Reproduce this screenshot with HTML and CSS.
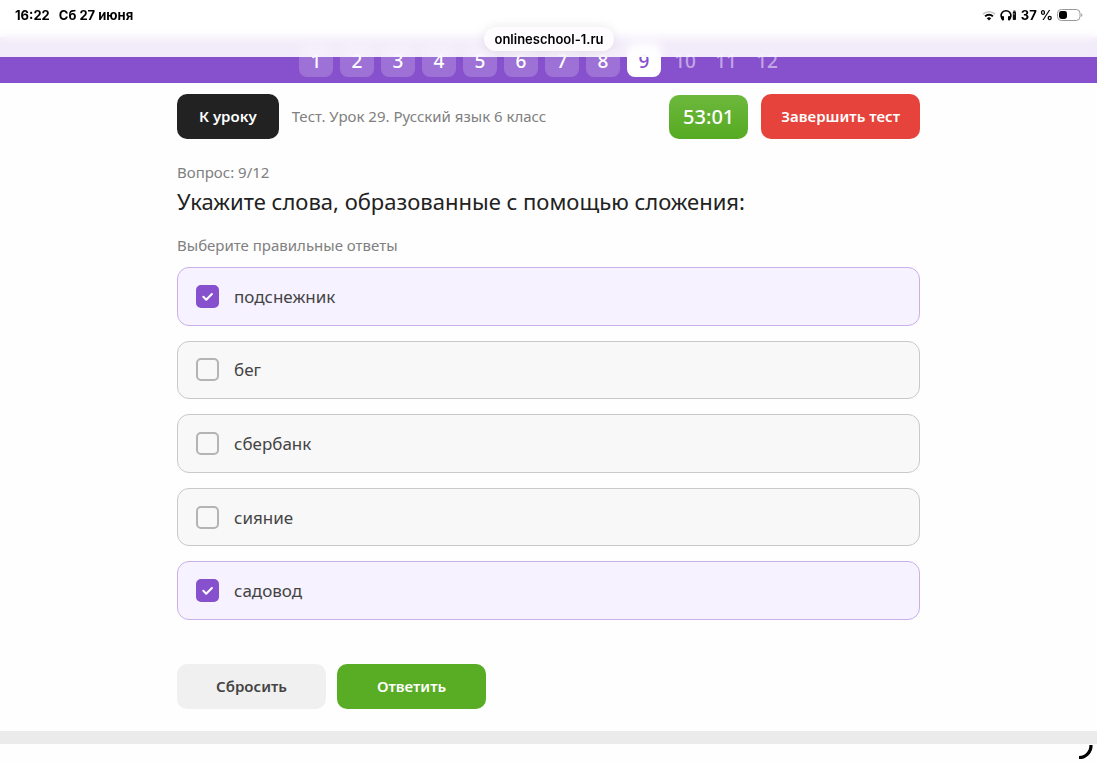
FILE: index.html
```html
<!DOCTYPE html>
<html lang="ru">
<head>
    <meta charset="UTF-8">
    <meta name="viewport" content="width=device-width, initial-scale=1.0">
    <title>Тест. Урок 29. Русский язык 6 класс</title>
    <link rel="stylesheet" href="styles.css">
</head>
<body>
    <!-- Status bar -->
    <div class="status-bar">
        <div class="status-row">
            <div class="status-group status-date">
                <span>16:22</span>
                <span>Сб 27 июня</span>
            </div>
            <div class="status-group">
                <svg class="icon-wifi" width="14" height="11" viewBox="0 0 14 11" fill="none">
                    <path d="M1 4.2a8.6 8.6 0 0 1 12 0" stroke="#c4c4c4" stroke-width="1.7"/>
                    <path d="M3.1 6.4a5.6 5.6 0 0 1 7.8 0" stroke="#000" stroke-width="2"/>
                    <path d="M4.8 8.3a3.2 3.2 0 0 1 4.4 0L7 10.6z" fill="#000"/>
                </svg>
                <svg width="17" height="12" viewBox="0 0 17 12" fill="none">
                    <path d="M3.2 10.6A4.9 4.9 0 1 1 8.8 10.6" stroke="#000" stroke-width="1.6"/>
                    <rect x="1.8" y="6.9" width="2.2" height="4.6" rx="1" fill="#000"/>
                    <rect x="8" y="6.9" width="2.2" height="4.6" rx="1" fill="#000"/>
                    <rect x="13.4" y="1.4" width="2" height="1.4" fill="#444"/>
                    <rect x="12.8" y="2.6" width="3.2" height="8.4" rx=".8" fill="#111"/>
                    <path d="M14 4v2" stroke="#aaa" stroke-width=".8"/>
                </svg>
                <span>37 %</span>
                <svg width="26" height="12" viewBox="0 0 26 12" fill="none">
                    <rect x=".5" y=".5" width="22.5" height="11" rx="3.8" stroke="#999"/>
                    <rect x="2" y="2" width="8" height="8" rx="2.4" fill="#000"/>
                    <path d="M24.2 4.2c1.6.5 1.6 3.1 0 3.6z" fill="#999"/>
                </svg>
            </div>
        </div>
        <div class="address">onlineschool-1.ru</div>
    </div>

    <!-- Question numbers -->
    <nav class="steps">
        <a class="step done" href="#1">1</a>
        <a class="step done" href="#2">2</a>
        <a class="step done" href="#3">3</a>
        <a class="step done" href="#4">4</a>
        <a class="step done" href="#5">5</a>
        <a class="step done" href="#6">6</a>
        <a class="step done" href="#7">7</a>
        <a class="step done" href="#8">8</a>
        <a class="step current" href="#9">9</a>
        <a class="step" href="#10">10</a>
        <a class="step" href="#11">11</a>
        <a class="step" href="#12">12</a>
    </nav>

    <main class="container">
        <header class="test-header">
            <button class="btn btn-dark" type="button">К уроку</button>
            <span class="test-name">Тест. Урок 29. Русский язык 6 класс</span>
            <div class="timer">53:01</div>
            <button class="btn btn-red" type="button">Завершить тест</button>
        </header>

        <form class="question">
            <p class="counter">Вопрос: 9/12</p>
            <h1>Укажите слова, образованные с помощью сложения:</h1>
            <p class="hint">Выберите правильные ответы</p>

            <div class="answers">
                <label class="answer">
                    <input type="checkbox" checked>
                    <svg class="tick" viewBox="0 0 22 22"><path d="M7 11.3l2.8 2.7 5.4-5.3"/></svg>
                    <span>подснежник</span>
                </label>
                <label class="answer">
                    <input type="checkbox">
                    <svg class="tick" viewBox="0 0 22 22"><path d="M7 11.3l2.8 2.7 5.4-5.3"/></svg>
                    <span>бег</span>
                </label>
                <label class="answer">
                    <input type="checkbox">
                    <svg class="tick" viewBox="0 0 22 22"><path d="M7 11.3l2.8 2.7 5.4-5.3"/></svg>
                    <span>сбербанк</span>
                </label>
                <label class="answer">
                    <input type="checkbox">
                    <svg class="tick" viewBox="0 0 22 22"><path d="M7 11.3l2.8 2.7 5.4-5.3"/></svg>
                    <span>сияние</span>
                </label>
                <label class="answer">
                    <input type="checkbox" checked>
                    <svg class="tick" viewBox="0 0 22 22"><path d="M7 11.3l2.8 2.7 5.4-5.3"/></svg>
                    <span>садовод</span>
                </label>
            </div>

            <div class="actions">
                <button class="btn btn-grey" type="reset">Сбросить</button>
                <button class="btn btn-green" type="button">Ответить</button>
            </div>
        </form>
    </main>

    <footer class="footer-line"></footer>

    <svg class="corner" width="18" height="18" viewBox="0 0 18 18" fill="none">
        <path d="M2 14.5A12 12 0 0 0 14 2" stroke="#000" stroke-width="3.2"/>
    </svg>
</body>
</html>
```
FILE: styles.css
```css
* {
    box-sizing: border-box;
}
body {
    font-family: 'Noto Sans', 'Open Sans', sans-serif;
    margin: 0;
    background-color: #fefefe;
    color: #222;
}

/* Status bar */
.status-bar {
    position: fixed;
    top: 0;
    left: 0;
    right: 0;
    z-index: 2;
    height: 57px;
    padding: 6px 14px 0 15px;
    background-color: rgba(255, 255, 255, 0.89);
    backdrop-filter: blur(5px);
    font-family: Inter, sans-serif;
    font-size: 13px;
    font-weight: 700;
    line-height: 18px;
    color: #000;
}
.status-row {
    display: flex;
    justify-content: space-between;
}
.status-group {
    display: flex;
    align-items: center;
    gap: 4px;
}
.status-date {
    gap: 9px;
}
.address {
    width: fit-content;
    margin: 3px auto 0;
    padding: 3px 10px;
    border-radius: 12px;
    background-color: #fffcff;
    box-shadow: 0 0 12px rgba(0, 0, 0, 0.09);
    font-weight: 600;
}

/* Question numbers */
.steps {
    display: flex;
    justify-content: center;
    gap: 7px;
    margin-top: 37px;
    padding: 6px 14px 6px 0;
    background-color: #8750cd;
}
.step {
    width: 34px;
    height: 34px;
    border-radius: 8px;
    font-size: 19px;
    font-weight: 500;
    line-height: 36px;
    text-align: center;
    text-decoration: none;
    color: rgba(255, 255, 255, 0.5);
}
.step.done {
    background-color: rgba(255, 255, 255, 0.19);
    color: #fff;
}
.step.current {
    background-color: #fff;
    color: #8750cd;
}

/* Test */
.container {
    max-width: 743px;
    margin: 0 auto;
    padding: 11px 0 22px;
}
.test-header {
    display: flex;
    align-items: center;
    gap: 13px;
}
.btn {
    height: 45px;
    padding: 0 22px 2px;
    border: none;
    border-radius: 10px;
    font-family: inherit;
    font-size: 15px;
    font-weight: 600;
    color: #fff;
    cursor: pointer;
}
.btn-dark {
    background-color: #222;
}
.btn-red {
    padding: 0 20px 2px;
    background-color: #e5433b;
}
.btn-grey {
    background-color: #f0f0f0;
    color: #444;
}
.btn-green {
    background-color: #58ad25;
}
.test-name {
    flex: 1;
    padding-bottom: 2px;
    font-size: 15px;
    color: #808080;
}
.timer {
    padding: 0 14px;
    border-radius: 10px;
    background: linear-gradient(#6cb83d, #56aa22);
    font-size: 20px;
    font-weight: 500;
    line-height: 44px;
    color: #fff;
}
.counter,
.hint {
    margin: 0;
    font-size: 15px;
    line-height: 20px;
    color: #808080;
}
.counter {
    margin-top: 23px;
}
h1 {
    margin: 4px 0 19px;
    font-size: 22px;
    font-weight: 400;
    line-height: 30px;
}
.answers {
    display: grid;
    grid-auto-rows: 1fr;
    gap: 15px;
    min-height: 353px;
    margin-top: 12px;
}
.answer {
    display: flex;
    align-items: center;
    padding: 0 18px;
    border: 1px solid #c9c9c9;
    border-radius: 12px;
    background-color: #f8f8f8;
    font-size: 17px;
    color: #444;
    cursor: pointer;
}
.answer:has(input:checked) {
    border-color: #c9b0e8;
    background-color: #f7f2ff;
}
.answer input {
    appearance: none;
    width: 23px;
    height: 23px;
    margin: 0;
    border: 2px solid #b4b4b4;
    border-radius: 5px;
}
.answer input:checked {
    border-color: #8750cd;
    background-color: #8750cd;
}
.tick {
    width: 23px;
    height: 23px;
    margin-left: -23px;
    fill: none;
    stroke: none;
    stroke-width: 2;
    stroke-linecap: round;
    stroke-linejoin: round;
}
.answer input:checked + .tick {
    stroke: #fff;
}
.answer span {
    margin-left: 15px;
}
.actions {
    display: flex;
    gap: 11px;
    margin-top: 44px;
}
.actions .btn {
    min-width: 149px;
}
.footer-line {
    height: 13px;
    background-color: #ebebeb;
}
.corner {
    position: fixed;
    right: 2px;
    bottom: 2px;
}
```
